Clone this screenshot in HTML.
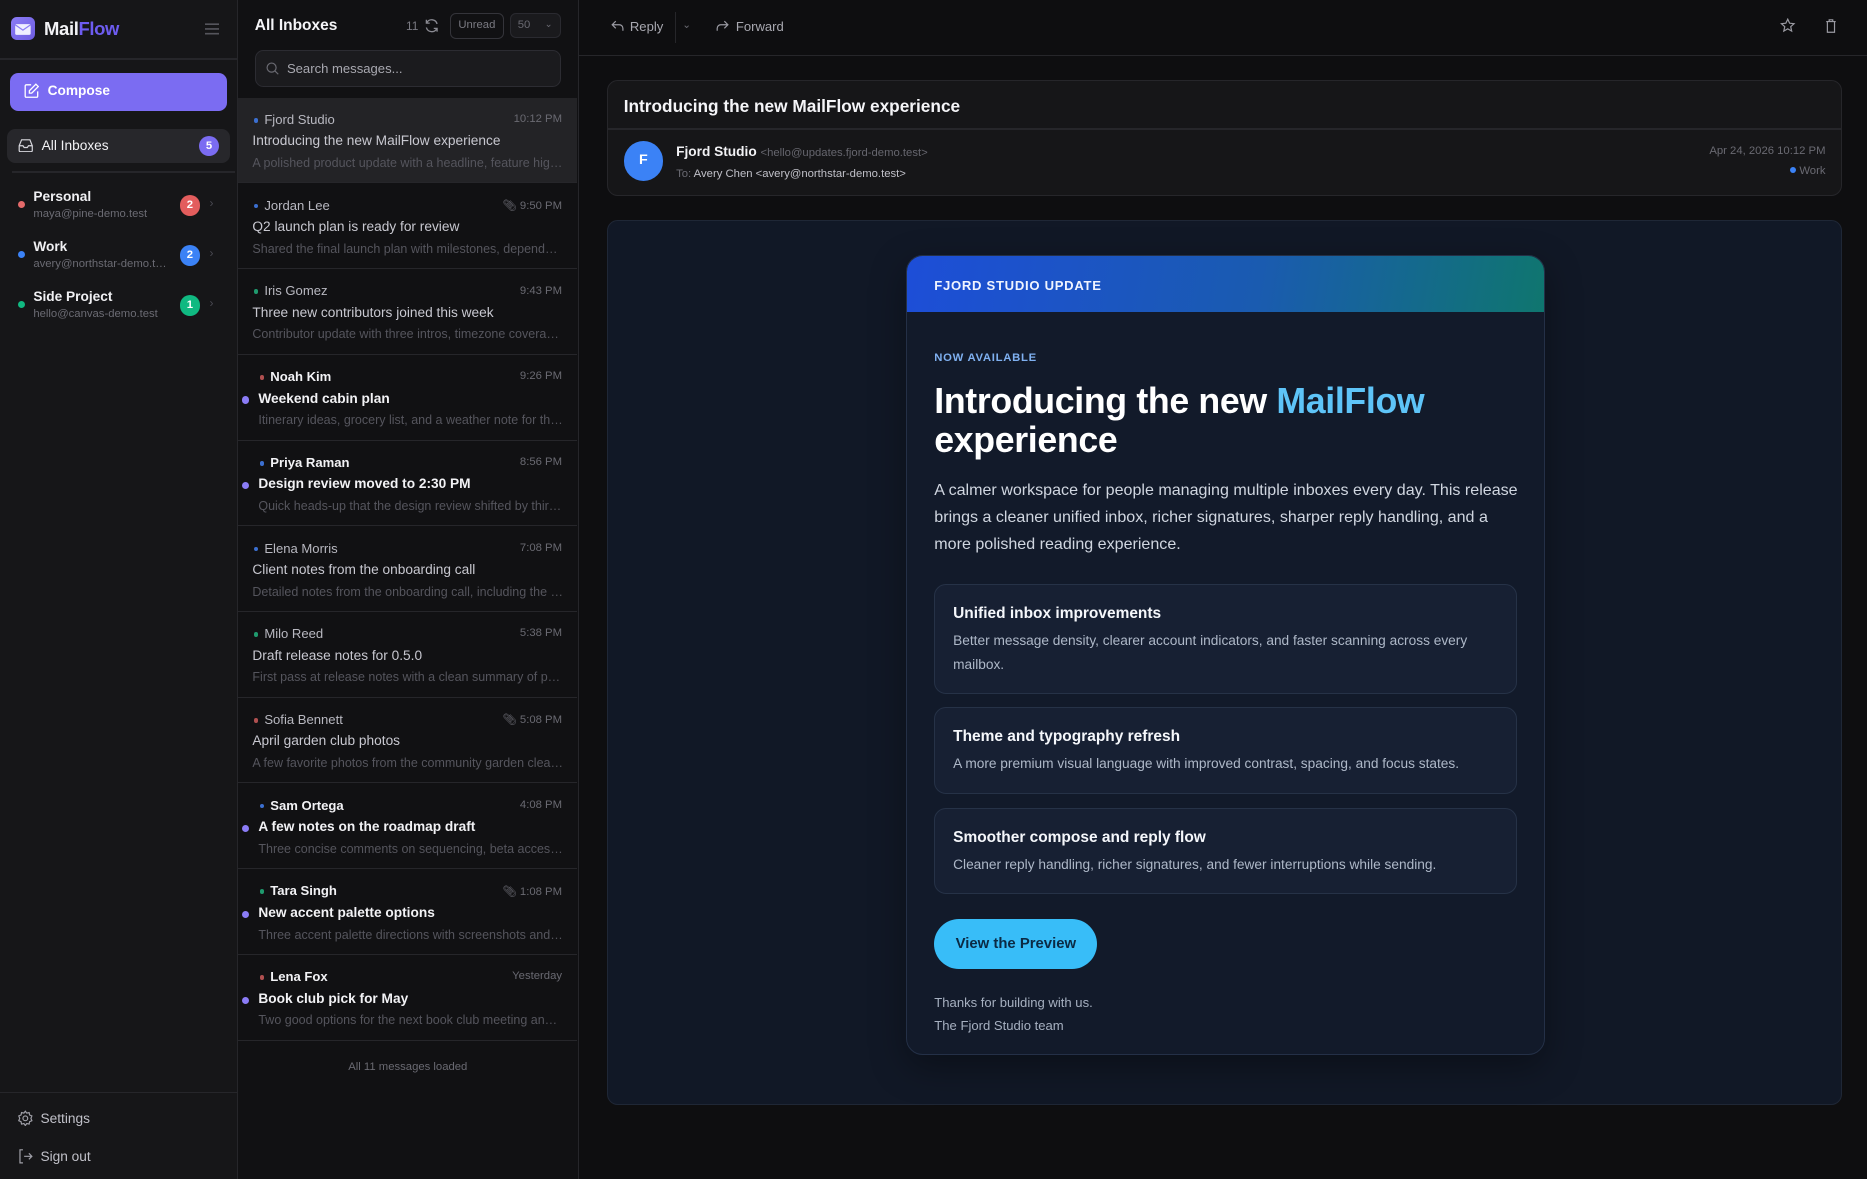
<!DOCTYPE html>
<html><head><meta charset="utf-8">
<style>
html{zoom:1.19069;}
*{box-sizing:border-box;margin:0;padding:0}
body{width:1568px;height:990px;overflow:hidden;background:#0e0e10;font-family:"Liberation Sans",sans-serif;color:#e6e6ea;position:relative}
.abs{position:absolute}
#side{left:0;top:0;width:200px;height:990px;background:#161618;border-right:1px solid #26262a}
#list{left:200px;top:0;width:286px;height:990px;background:#111113;border-right:1px solid #26262a}
#read{left:486px;top:0;width:1082px;height:990px;background:#0e0e10}
.t{position:absolute;white-space:nowrap}
.item{position:absolute;left:0;width:285px;height:72px;border-bottom:1px solid #26262a}
.item .s{position:absolute;left:22px;top:12px;font-size:11px;color:#b8b8c0}
.item .s:before{content:"";position:absolute;left:-9px;top:5px;width:4px;height:4px;border-radius:50%;background:var(--c)}
.item .tm{position:absolute;right:13px;top:13px;font-size:9.5px;color:#6a6a72}
.item .sub{position:absolute;left:12px;top:30px;font-size:11.5px;color:#c8c8d0}
.item .pv{position:absolute;left:12px;top:49px;width:261px;font-size:10.5px;color:#55555d;white-space:nowrap;overflow:hidden;text-overflow:ellipsis}
.item.u .s{left:27px;font-weight:bold;color:#f2f2f5}
.item.u .sub{left:17px;font-weight:bold;color:#f2f2f5}
.item.u .pv{left:17px;width:256px}
.item.u:before{content:"";position:absolute;left:3px;top:35px;width:6px;height:6px;border-radius:50%;background:#8b7cf6}
.acc .n{font-size:11.5px;font-weight:bold;color:#f0f0f3}
.acc .e{font-size:9.5px;color:#6b6b73;margin-top:3px}
.badge{position:absolute;width:16px;height:16px;border-radius:50%;font-size:9.5px;font-weight:bold;color:#fff;text-align:center;line-height:16px}
.feat{position:absolute;left:23px;width:489px;background:#172033;border:1px solid #263247;border-radius:10px;padding:0 15px}
.feat h4{font-size:13px;font-weight:bold;color:#f5f7fb;margin-top:17px}
.feat p{font-size:11.5px;color:#aeb8c8;line-height:19.5px;margin-top:5px}
</style></head><body>

<div id="side" class="abs">
  <div class="abs" style="left:9px;top:14px;width:20px;height:20px;border-radius:5px;background:linear-gradient(135deg,#8b7cf6,#6d5ce0)">
    <svg width="20" height="20" viewBox="0 0 20 20"><rect x="3.5" y="6" width="13" height="9" rx="1" fill="#eef" /><path d="M3.5 6.5 L10 11 L16.5 6.5" stroke="#8b7cf6" stroke-width="1" fill="none"/></svg>
  </div>
  <div class="t" style="left:37px;top:15px;font-size:15.5px;font-weight:bold;letter-spacing:-0.3px"><span style="color:#f2f2f5">Mail</span><span style="color:#6d5cf0">Flow</span></div>
  <svg class="abs" style="left:172px;top:19px" width="12" height="10"><path d="M0 1h12M0 5h12M0 9h12" stroke="#55555c" stroke-width="1.4"/></svg>
  <div class="abs" style="left:0;top:49px;width:199px;height:1px;background:#26262a"></div>
  <div class="abs" style="left:8px;top:61px;width:183px;height:32px;border-radius:7px;background:#7b6cf2"></div>
  <svg class="abs" style="left:20px;top:70px" width="13" height="13" viewBox="0 0 13 13"><path d="M6 1.5H2a1 1 0 0 0-1 1V11a1 1 0 0 0 1 1h8.5a1 1 0 0 0 1-1V7" stroke="#fff" stroke-width="1.1" fill="none"/><path d="M10 1l2 2-5.5 5.5H4.5v-2z" stroke="#fff" stroke-width="1.1" fill="none"/></svg>
  <div class="t" style="left:40px;top:70px;font-size:11.5px;font-weight:bold;color:#fff">Compose</div>
  <div class="abs" style="left:6px;top:108px;width:187px;height:29px;border-radius:7px;background:#27272b"></div>
  <svg class="abs" style="left:15px;top:116px" width="13" height="12" viewBox="0 0 13 12"><path d="M1 6.5L3 1.5h7l2 5V10.5a1 1 0 0 1-1 1H2a1 1 0 0 1-1-1z M1 6.5h3.2l1 1.5h2.6l1-1.5H12" stroke="#d8d8de" stroke-width="1" fill="none"/></svg>
  <div class="t" style="left:35px;top:116px;font-size:11.5px;color:#f2f2f5">All Inboxes</div>
  <div class="badge" style="left:167px;top:114px;background:#7b6cf2;width:17px;height:17px;line-height:17px">5</div>
  <div class="abs" style="left:10px;top:144px;width:187px;height:1px;background:#26262a"></div>

  <div class="abs" style="left:15px;top:169px;width:6px;height:6px;border-radius:50%;background:#e46a6a"></div>
  <div class="abs acc" style="left:28px;top:159px"><div class="n">Personal</div><div class="e">maya@pine-demo.test</div></div>
  <div class="badge" style="left:151px;top:164px;background:#e35d5d;width:17px;height:17px;line-height:17px">2</div>
  <div class="t" style="left:176px;top:165px;font-size:10px;color:#4a4a52">›</div>

  <div class="abs" style="left:15px;top:211px;width:6px;height:6px;border-radius:50%;background:#3b82f6"></div>
  <div class="abs acc" style="left:28px;top:201px"><div class="n">Work</div><div class="e">avery@northstar-demo.t…</div></div>
  <div class="badge" style="left:151px;top:206px;background:#3b82f6;width:17px;height:17px;line-height:17px">2</div>
  <div class="t" style="left:176px;top:207px;font-size:10px;color:#4a4a52">›</div>

  <div class="abs" style="left:15px;top:253px;width:6px;height:6px;border-radius:50%;background:#10b981"></div>
  <div class="abs acc" style="left:28px;top:243px"><div class="n">Side Project</div><div class="e">hello@canvas-demo.test</div></div>
  <div class="badge" style="left:151px;top:248px;background:#10b981;width:17px;height:17px;line-height:17px">1</div>
  <div class="t" style="left:176px;top:249px;font-size:10px;color:#4a4a52">›</div>

  <div class="abs" style="left:0;top:917px;width:199px;height:1px;background:#26262a"></div>
  <svg class="abs" style="left:14px;top:932px" width="14" height="14" viewBox="0 0 14 14"><circle cx="7" cy="7" r="2" stroke="#a0a0a8" fill="none" stroke-width="1"/><path d="M7 1l1.2 1.6 2-.4.4 2L12.5 5l-.8 2 .8 2-1.9.8-.4 2-2-.4L7 13l-1.2-1.6-2 .4-.4-2L1.5 9l.8-2-.8-2 1.9-.8.4-2 2 .4z" stroke="#a0a0a8" fill="none" stroke-width="1"/></svg>
  <div class="t" style="left:34px;top:933px;font-size:11.5px;color:#c0c0c8">Settings</div>
  <svg class="abs" style="left:14px;top:964px" width="14" height="14" viewBox="0 0 14 14"><path d="M5 1.5H2.5v11H5M6 7h6.5M10 4.5L12.5 7 10 9.5" stroke="#a0a0a8" fill="none" stroke-width="1"/></svg>
  <div class="t" style="left:34px;top:965px;font-size:11.5px;color:#c0c0c8">Sign out</div>
</div>

<div id="list" class="abs">
  <div class="t" style="left:14px;top:14px;font-size:13px;font-weight:bold;color:#f5f5f8">All Inboxes</div>
  <div class="t" style="left:141px;top:16px;font-size:10px;color:#7a7a82">11</div>
  <svg class="abs" style="left:156px;top:15px" width="13" height="13" viewBox="0 0 13 13"><path d="M11 5A4.7 4.7 0 0 0 2.3 4M2 8a4.7 4.7 0 0 0 8.7 1M2 1.5V4.3h2.8M11 11.5V8.7H8.2" stroke="#8a8a92" fill="none" stroke-width="1.1"/></svg>
  <div class="abs" style="left:178px;top:11px;width:45px;height:22px;border:1px solid #34343a;border-radius:5px;font-size:9.5px;color:#7a7a82;text-align:center;line-height:20px">Unread</div>
  <div class="abs" style="left:228px;top:11px;width:43px;height:21px;border:1px solid #2a2a30;background:#1a1a1d;border-radius:5px;font-size:9.5px;color:#6a6a72;line-height:19px;padding-left:6px">50<span style="position:absolute;right:6px;top:0;font-size:8px">⌄</span></div>
  <div class="abs" style="left:14px;top:42px;width:257px;height:31px;border:1px solid #2c2c32;background:#1b1b1e;border-radius:7px"></div>
  <svg class="abs" style="left:23px;top:52px" width="11" height="11" viewBox="0 0 11 11"><circle cx="4.7" cy="4.7" r="3.8" stroke="#6a6a72" fill="none" stroke-width="1"/><path d="M7.5 7.5l2.8 2.8" stroke="#6a6a72" stroke-width="1"/></svg>
  <div class="t" style="left:41px;top:51px;font-size:11px;color:#a8a8b0">Search messages...</div>

  <div class="item" style="top:82px;background:#232326;--c:#3b6fd0"><div class="s">Fjord Studio</div><div class="tm">10:12 PM</div><div class="sub">Introducing the new MailFlow experience</div><div class="pv">A polished product update with a headline, feature highlights and more</div></div>
  <div class="item" style="top:154px;--c:#3b6fd0"><div class="s">Jordan Lee</div><div class="tm">📎︎ 9:50 PM</div><div class="sub">Q2 launch plan is ready for review</div><div class="pv">Shared the final launch plan with milestones, dependencies and more</div></div>
  <div class="item" style="top:226px;--c:#1f9a6e"><div class="s">Iris Gomez</div><div class="tm">9:43 PM</div><div class="sub">Three new contributors joined this week</div><div class="pv">Contributor update with three intros, timezone coverage and more</div></div>
  <div class="item u" style="top:298px;--c:#b05050"><div class="s">Noah Kim</div><div class="tm">9:26 PM</div><div class="sub">Weekend cabin plan</div><div class="pv">Itinerary ideas, grocery list, and a weather note for the trip</div></div>
  <div class="item u" style="top:370px;--c:#3b6fd0"><div class="s">Priya Raman</div><div class="tm">8:56 PM</div><div class="sub">Design review moved to 2:30 PM</div><div class="pv">Quick heads-up that the design review shifted by thirty minutes</div></div>
  <div class="item" style="top:442px;--c:#3b6fd0"><div class="s">Elena Morris</div><div class="tm">7:08 PM</div><div class="sub">Client notes from the onboarding call</div><div class="pv">Detailed notes from the onboarding call, including the next steps</div></div>
  <div class="item" style="top:514px;--c:#1f9a6e"><div class="s">Milo Reed</div><div class="tm">5:38 PM</div><div class="sub">Draft release notes for 0.5.0</div><div class="pv">First pass at release notes with a clean summary of polish work</div></div>
  <div class="item" style="top:586px;--c:#b05050"><div class="s">Sofia Bennett</div><div class="tm">📎︎ 5:08 PM</div><div class="sub">April garden club photos</div><div class="pv">A few favorite photos from the community garden cleanup day</div></div>
  <div class="item u" style="top:658px;--c:#3b6fd0"><div class="s">Sam Ortega</div><div class="tm">4:08 PM</div><div class="sub">A few notes on the roadmap draft</div><div class="pv">Three concise comments on sequencing, beta access and more</div></div>
  <div class="item u" style="top:730px;--c:#1f9a6e"><div class="s">Tara Singh</div><div class="tm">📎︎ 1:08 PM</div><div class="sub">New accent palette options</div><div class="pv">Three accent palette directions with screenshots and notes</div></div>
  <div class="item u" style="top:802px;--c:#b05050"><div class="s">Lena Fox</div><div class="tm">Yesterday</div><div class="sub">Book club pick for May</div><div class="pv">Two good options for the next book club meeting and a poll</div></div>
  <div class="t" style="left:0;width:285px;text-align:center;top:891px;font-size:9.5px;color:#6a6a72">All 11 messages loaded</div>
</div>

<div id="read" class="abs">
  <svg class="abs" style="left:27px;top:17px" width="11" height="10" viewBox="0 0 11 10"><path d="M4 1L1 4l3 3M1 4h6a3 3 0 0 1 3 3v2" stroke="#9a9aa2" fill="none" stroke-width="1"/></svg>
  <div class="t" style="left:43px;top:16px;font-size:11px;color:#a8a8b0">Reply</div>
  <div class="abs" style="left:81px;top:10px;width:1px;height:26px;background:#26262a"></div>
  <div class="t" style="left:87px;top:15px;font-size:9px;color:#6a6a72">⌄</div>
  <svg class="abs" style="left:115px;top:17px" width="11" height="10" viewBox="0 0 11 10"><path d="M7 1l3 3-3 3M10 4H4a3 3 0 0 0-3 3v2" stroke="#9a9aa2" fill="none" stroke-width="1"/></svg>
  <div class="t" style="left:132px;top:16px;font-size:11px;color:#a8a8b0">Forward</div>
  <svg class="abs" style="left:1009px;top:15px" width="13" height="13" viewBox="0 0 13 13"><path d="M6.5 1l1.6 3.4 3.7.4-2.8 2.5.8 3.7-3.3-1.9-3.3 1.9.8-3.7L1.2 4.8l3.7-.4z" stroke="#9a9aa2" fill="none" stroke-width="1"/></svg>
  <svg class="abs" style="left:1047px;top:15px" width="10" height="13" viewBox="0 0 10 13"><path d="M1 3h8M3.5 3V1.5h3V3M2 3v9h6V3" stroke="#9a9aa2" fill="none" stroke-width="1"/></svg>
  <div class="abs" style="left:0;top:46px;width:1082px;height:1px;background:#26262a"></div>

  <div class="abs" style="left:24px;top:67px;width:1037px;height:98px;background:#161618;border:1px solid #26262a;border-radius:9px">
    <div class="t" style="left:13px;top:13px;font-size:14.5px;font-weight:bold;color:#f5f5f8">Introducing the new MailFlow experience</div>
    <div class="abs" style="left:0;top:40px;width:1035px;height:1px;background:#26262a"></div>
    <div class="abs" style="left:13px;top:51px;width:33px;height:33px;border-radius:50%;background:#3b82f6;color:#fff;font-size:12px;font-weight:bold;text-align:center;line-height:33px">F</div>
    <div class="t" style="left:57px;top:53px;font-size:11.5px;font-weight:bold;color:#f2f2f5">Fjord Studio <span style="font-weight:normal;font-size:9.5px;color:#66666e">&lt;hello@updates.fjord-demo.test&gt;</span></div>
    <div class="t" style="left:57px;top:73px;font-size:9.5px;color:#c0c0c8"><span style="color:#6a6a72">To:</span> Avery Chen &lt;avery@northstar-demo.test&gt;</div>
    <div class="t" style="right:13px;top:54px;font-size:9.5px;color:#6a6a72">Apr 24, 2026 10:12 PM</div>
    <div class="t" style="right:13px;top:71px;font-size:9.5px;color:#6a6a72"><span style="display:inline-block;width:5px;height:5px;border-radius:50%;background:#3b82f6;margin-right:3px;vertical-align:1px"></span>Work</div>
  </div>

  <div class="abs" style="left:24px;top:185px;width:1037px;height:743px;background:#111826;border:1px solid #1f2736;border-radius:9px">
    <div class="abs" style="left:250px;top:28px;width:537px;height:672px;background:#121a2a;border:1px solid #243047;border-radius:14px;overflow:hidden;box-shadow:0 10px 30px rgba(0,0,0,.35)">
      <div class="abs" style="left:0;top:0;width:537px;height:47px;background:linear-gradient(100deg,#1d4ed8,#1a5bb0 55%,#0f766e)"></div>
      <div class="t" style="left:23px;top:19px;font-size:11px;font-weight:bold;color:#f0f4ff;letter-spacing:0.6px">FJORD STUDIO UPDATE</div>
      <div class="t" style="left:23px;top:81px;font-size:9.5px;font-weight:bold;color:#7fb0f0;letter-spacing:0.6px">NOW AVAILABLE</div>
      <div class="abs" style="left:23px;top:106px;width:500px;font-size:30px;font-weight:bold;line-height:33px;color:#fff;letter-spacing:-0.3px">Introducing the new <span style="color:#5ec4f8">MailFlow</span><br>experience</div>
      <div class="abs" style="left:23px;top:186px;width:495px;font-size:13.5px;line-height:22.7px;color:#d0d6e0">A calmer workspace for people managing multiple inboxes every day. This release brings a cleaner unified inbox, richer signatures, sharper reply handling, and a more polished reading experience.</div>
      <div class="feat" style="top:276px;height:92px"><h4>Unified inbox improvements</h4><p>Better message density, clearer account indicators, and faster scanning across every mailbox.</p></div>
      <div class="feat" style="top:379px;height:73px"><h4>Theme and typography refresh</h4><p>A more premium visual language with improved contrast, spacing, and focus states.</p></div>
      <div class="feat" style="top:464px;height:72px"><h4>Smoother compose and reply flow</h4><p>Cleaner reply handling, richer signatures, and fewer interruptions while sending.</p></div>
      <div class="abs" style="left:23px;top:557px;width:137px;height:42px;border-radius:21px;background:#38bdf8;color:#0b2a44;font-size:12.5px;font-weight:bold;text-align:center;line-height:42px">View the Preview</div>
      <div class="t" style="left:23px;top:621px;font-size:11px;color:#a6b0c0">Thanks for building with us.</div>
      <div class="t" style="left:23px;top:640px;font-size:11px;color:#a6b0c0">The Fjord Studio team</div>
    </div>
  </div>
</div>
</body></html>
